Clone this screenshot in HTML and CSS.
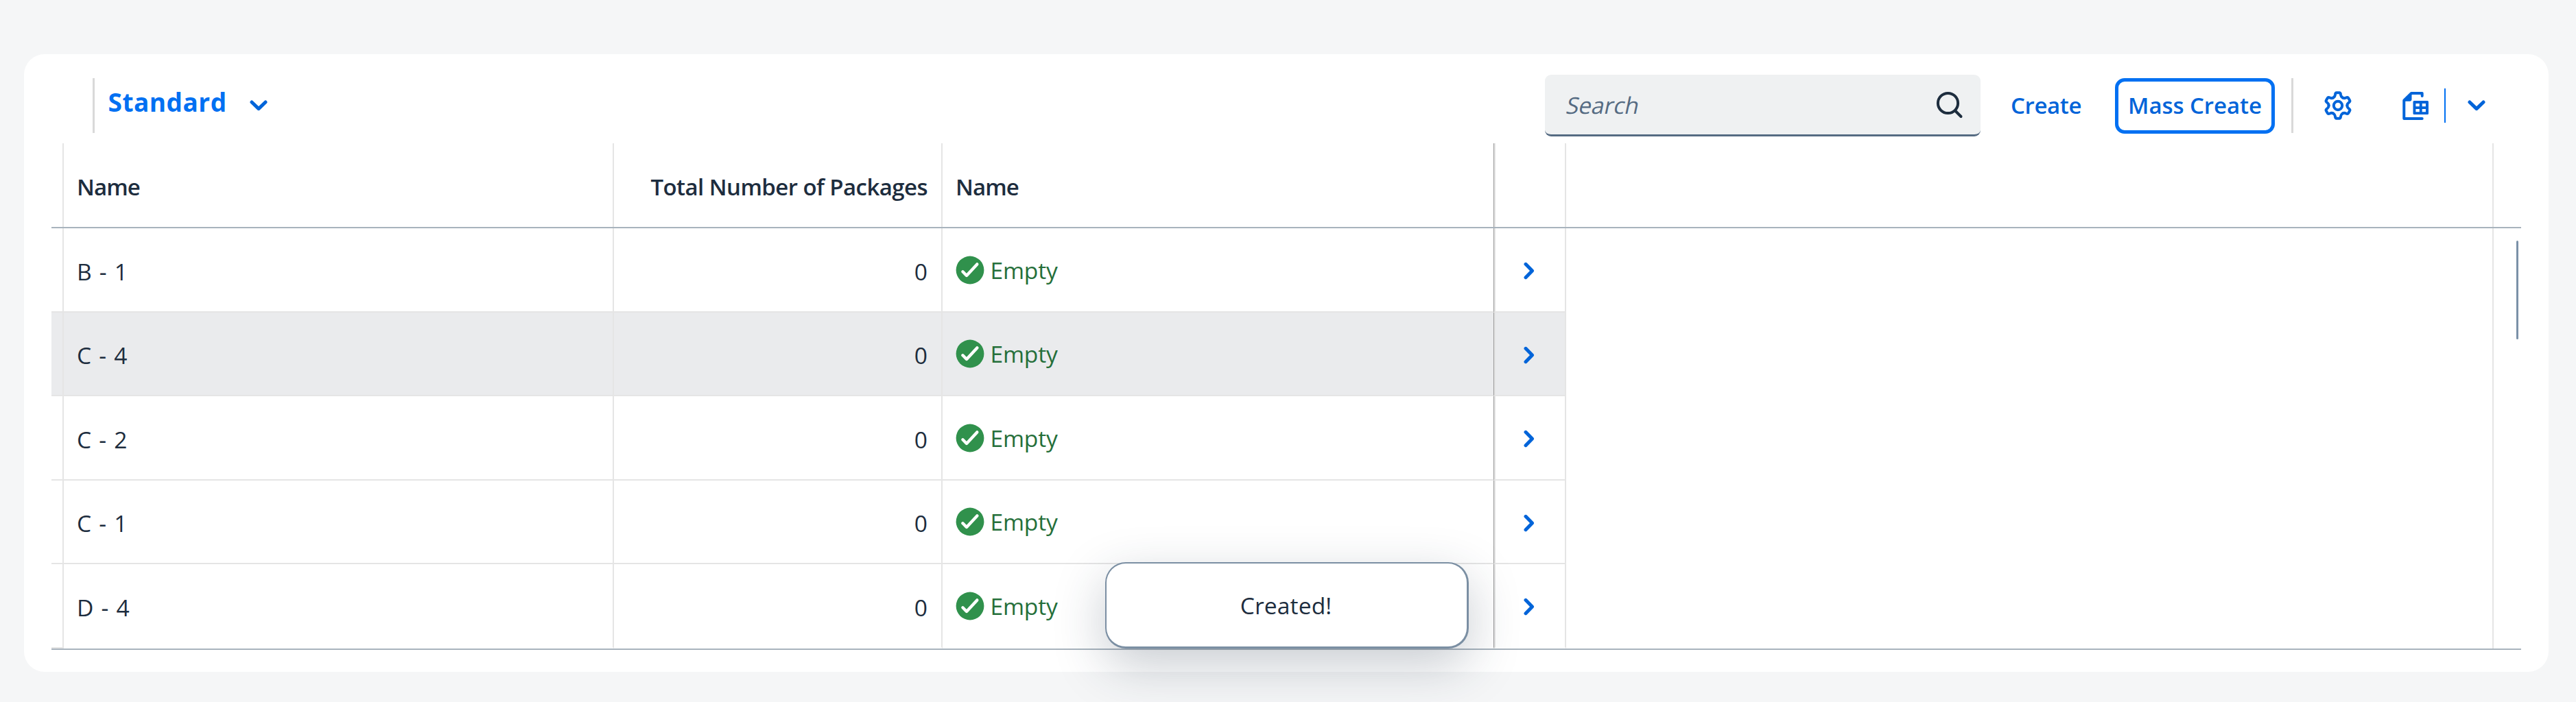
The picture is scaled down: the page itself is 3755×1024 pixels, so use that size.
FILE: index.html
```html
<!DOCTYPE html>
<html lang="en">
<head>
<meta charset="utf-8">
<title>Packages</title>
<link rel="stylesheet" href="styles.css">
</head>
<body>
<svg class="defs" width="0" height="0" aria-hidden="true">
  <symbol id="down" viewBox="0 0 26 16"><path d="M3 3 13 12.6 23 3" fill="none" stroke="currentColor" stroke-width="5" stroke-linecap="round" stroke-linejoin="round"/></symbol>
  <symbol id="right" viewBox="0 0 16 26"><path d="M3 3.300 12.500 13 3 22.700" fill="none" stroke="currentColor" stroke-width="5" stroke-linecap="round" stroke-linejoin="round"/></symbol>
  <symbol id="ok" viewBox="0 0 42 42"><circle cx="21" cy="21" r="20.4" fill="#30914c"/><path d="M10.4 23.3 16 29 31.3 12.4" fill="none" stroke="#fff" stroke-width="4.4" stroke-linecap="round" stroke-linejoin="round"/></symbol>
</svg>
<main class="card">
  <header class="toolbar">
    <span class="divider"></span>
    <h1 class="variant">Standard</h1>
    <svg class="down"><use href="#down"/></svg>
    <div class="search">
      <span class="placeholder">Search</span>
      <svg width="40" height="40" viewBox="0 0 40 40" fill="none" stroke="#1d2d3e" stroke-width="4" stroke-linecap="round"><circle cx="17.5" cy="17.5" r="14.6"/><path d="m28 28.500 8.500 8.500"/></svg>
    </div>
    <button class="create">Create</button>
    <button class="mass">Mass Create</button>
    <span class="divider end"></span>
    <svg class="gear" width="44" height="44" viewBox="-22 -22 44 44" fill="none" stroke="currentColor" stroke-width="4" stroke-linecap="round">
      <defs><path id="tooth" d="M-6.700-11.600C-5-12.600-4.300-13.600-4.100-15.500-3.900-18-3.200-18.700-2-18.700H2C3.200-18.700 3.900-18 4.100-15.500 4.300-13.600 5-12.600 6.700-11.600"/></defs>
      <use href="#tooth"/><use href="#tooth" transform="rotate(60)"/><use href="#tooth" transform="rotate(120)"/><use href="#tooth" transform="rotate(180)"/><use href="#tooth" transform="rotate(240)"/><use href="#tooth" transform="rotate(300)"/>
      <circle r="6.200"/>
    </svg>
    <svg class="export" width="44" height="44" viewBox="0 0 44 44">
      <path d="M30.700 8V3.900H15L4.300 14.500V41H30.700" fill="none" stroke="currentColor" stroke-width="4" stroke-linecap="round" stroke-linejoin="round"/>
      <path d="M4 15.800V14L14 4h1.500v8.800a3 3 0 0 1-3 3z" fill="currentColor"/>
      <path fill="currentColor" fill-rule="evenodd" d="M19 15H38.500A1.500 1.500 0 0 1 40 16.500V33.500A1.500 1.500 0 0 1 38.500 35H19A1.500 1.500 0 0 1 17.500 33.500V16.500A1.500 1.500 0 0 1 19 15zM21.400 19v4.200h5.400V19zm9.300 0v4.200h5.300V19zm-9.300 8v4.300h5.400V27zm9.300 0v4.300h5.300V27z"/>
    </svg>
    <span class="split"></span>
    <svg class="down menu"><use href="#down"/></svg>
  </header>
  <section class="table">
    <div class="row head">
      <div class="cell gutter"></div><div class="cell">Name</div><div class="cell num"><span class="total">Total Number of Packages</span></div><div class="cell name">Name</div><div class="cell nav"></div><div class="cell"></div><div></div>
    </div>
    <div class="body">
      <div class="rows">
        <div class="row"><div class="cell gutter"></div><div class="cell text">B - 1</div><div class="cell num">0</div><div class="cell name"><svg class="ok"><use href="#ok"/></svg><span class="status">Empty</span></div><div class="cell nav"><svg class="right"><use href="#right"/></svg></div></div>
        <div class="row hover"><div class="cell gutter"></div><div class="cell text">C - 4</div><div class="cell num">0</div><div class="cell name"><svg class="ok"><use href="#ok"/></svg><span class="status">Empty</span></div><div class="cell nav"><svg class="right"><use href="#right"/></svg></div></div>
        <div class="row"><div class="cell gutter"></div><div class="cell text">C - 2</div><div class="cell num">0</div><div class="cell name"><svg class="ok"><use href="#ok"/></svg><span class="status">Empty</span></div><div class="cell nav"><svg class="right"><use href="#right"/></svg></div></div>
        <div class="row"><div class="cell gutter"></div><div class="cell text">C - 1</div><div class="cell num">0</div><div class="cell name"><svg class="ok"><use href="#ok"/></svg><span class="status">Empty</span></div><div class="cell nav"><svg class="right"><use href="#right"/></svg></div></div>
        <div class="row"><div class="cell gutter"></div><div class="cell text">D - 4</div><div class="cell num">0</div><div class="cell name"><svg class="ok"><use href="#ok"/></svg><span class="status">Empty</span></div><div class="cell nav"><svg class="right"><use href="#right"/></svg></div></div>
      </div>
      <div class="filler"></div>
      <div class="rail"><div class="thumb"></div></div>
    </div>
  </section>
</main>
<div class="toast">Created!</div>
</body>
</html>
```
FILE: styles.css
```css
* { box-sizing: border-box; }
body {
  margin: 0;
  height: 1024px;
  padding: 79px 40px 44px 35px;
  overflow: hidden;
  background: #f5f6f7;
  color: #1d2d3e;
  font: 33.6px/46px "Open Sans", "Noto Sans", sans-serif;
}
svg { display: block; flex: none; }
.defs { position: absolute; }
.card {
  height: 901px;
  background: #fff;
  border-radius: 30px;
}

/* toolbar */
.toolbar {
  display: flex;
  align-items: center;
  height: 130px;
  padding: 20px 92px 0 100px;
  color: #0064d9;
}
.divider { flex: none; width: 3px; height: 80px; background: #d9d9d9; }
.variant {
  width: 226px;
  margin: 0;
  padding: 0 0 11px 19.5px;
  font-size: 37px;
  font-weight: 700;
  letter-spacing: .5px;
  color: #0070f2;
}
.down { width: 26px; height: 16px; }
.search {
  display: flex;
  align-items: center;
  justify-content: space-between;
  width: 635px;
  height: 90px;
  margin-left: auto;
  padding: 0 25px 0 32px;
  background: #eff1f2;
  border-bottom: 3px solid #556b82;
  border-radius: 9px;
}
/* slanted roman letterforms, not the cursive italic face */
.placeholder { transform: skewX(-12deg); letter-spacing: -.1px; color: #556b82; }
button {
  flex: none;
  padding: 0;
  border: 0;
  background: none;
  color: inherit;
  font: 600 33px/46px "Open Sans", "Noto Sans", sans-serif;
}
.create { width: 196px; padding: 0 0 1px 44px; text-align: left; letter-spacing: -.38px; }
.mass {
  width: 233px;
  height: 81px;
  padding-bottom: 1px;
  border: 5px solid #0070f2;
  border-radius: 14px;
  letter-spacing: -.08px;
  white-space: nowrap;
}
.end { margin-left: 24px; }
.gear { margin-left: 43px; }
.export { margin-left: 70px; }
.split { flex: none; width: 2px; height: 50px; margin-left: 19px; background: #0070f2; }
.menu { margin-left: 32px; }

/* table */
.table { margin: 0 40px; border-bottom: 2px solid #a8b3bd; }
.row { display: grid; grid-template-columns: 18px 802px 479px 804px 105px; }
.cell {
  display: flex;
  align-items: center;
  padding-left: 19px;
  border-right: 2px solid #e5e5e5;
  border-bottom: 2px solid #e5e5e5;
}
.gutter { padding-left: 0; }
.num { justify-content: flex-end; padding: 4px 20px 0 0; }
.text { padding-top: 4px; letter-spacing: 1.2px; }
.name { border-right: 1px solid #999; }
.nav { justify-content: center; padding: 3px 3px 0 0; border-left: 2px solid #e5e5e5; }
.head {
  height: 124px;
  grid-template-columns: 18px 802px 479px 804px 105px 1352px 40px;
  border-bottom: 2px solid #a8b3bd;
  font-size: 33px;
  font-weight: 600;
  letter-spacing: -.9px;
}
.head .cell { border-bottom: 0; padding-top: 5px; }
.total { letter-spacing: -.57px; }
.body { display: flex; height: 613px; }
.rows { display: grid; grid-template-rows: 123px 122px 123px 122px 123px; }
.rows .row:last-child .cell:not(:first-child) { border-bottom-color: transparent; }
.hover { background: #eaebed; }
.ok { width: 42px; height: 42px; }
.status { margin-left: 8.500px; letter-spacing: -.2px; color: #256f3a; }
.right { width: 16px; height: 26px; color: #0064d9; }
.filler { width: 1352px; border-right: 2px solid #e5e5e5; }
.rail { display: flex; justify-content: flex-end; width: 40px; padding: 18px 4px 0 0; }
.thumb { width: 3px; height: 144px; border-radius: 2px; background: #7b91a8; }

/* message toast */
.toast {
  position: absolute;
  left: 1611px;
  top: 820px;
  display: flex;
  align-items: center;
  justify-content: center;
  width: 530px;
  height: 126px;
  padding-right: 2px;
  background: #fff;
  border: 2px solid #7b8fa3;
  border-width: 2px 3px 3px 2px;
  border-radius: 30px;
  box-shadow: 0 24px 73px rgba(34, 53, 72, .25);
  letter-spacing: .13px;
}
```
